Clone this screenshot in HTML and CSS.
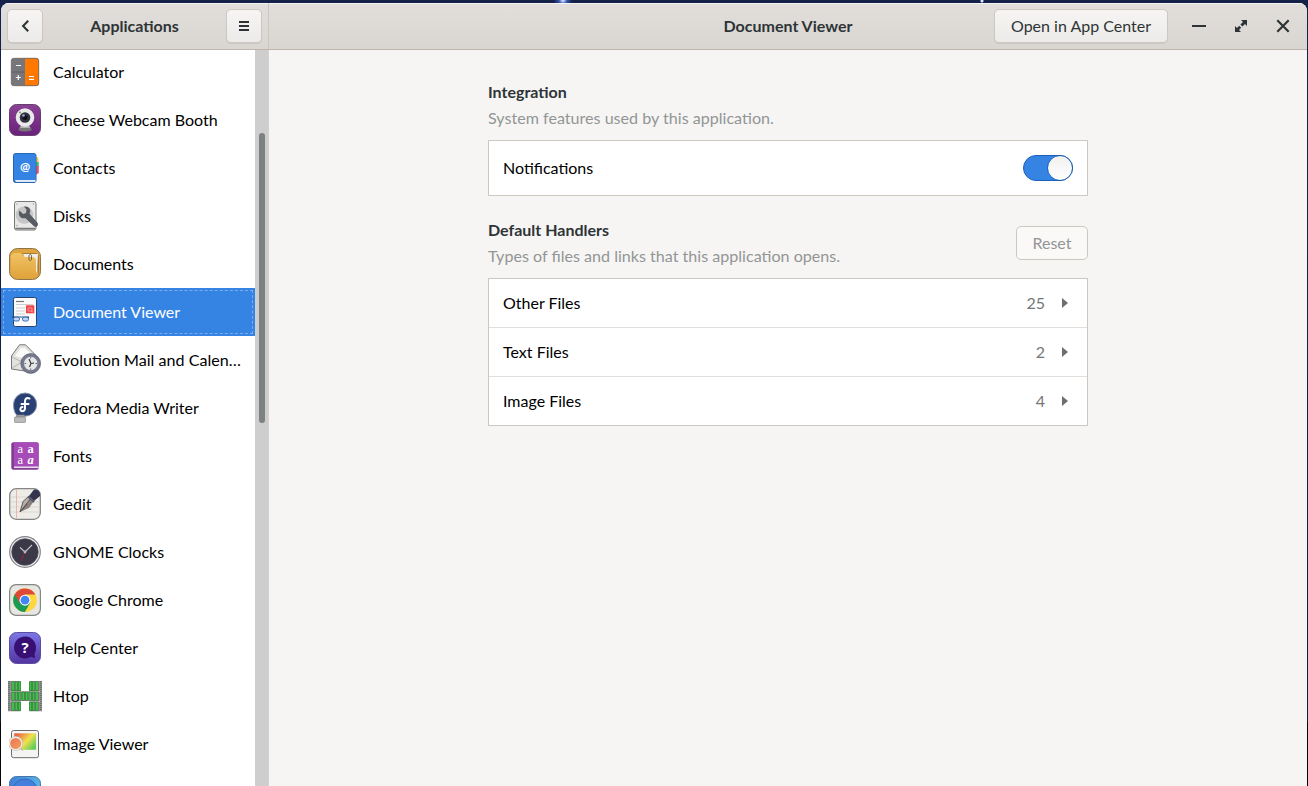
FILE: index.html
```html
<!DOCTYPE html>
<html lang="en">
<head>
<meta charset="utf-8">
<title>Applications</title>
<link rel="stylesheet" href="styles.css">
</head>
<body>
<div class="window">
  <header class="titlebar">
    <div class="titlebar-side">
      <button class="btn icon-btn" aria-label="Back"><svg width="16" height="16" viewBox="0 0 16 16"><path d="M11.200 2.800 6.100 8l5.100 5.200" fill="none" stroke="#2e3436" stroke-width="2.100"/></svg></button>
      <h1 class="title side-title">Applications</h1>
      <button class="btn icon-btn" aria-label="Menu"><svg width="16" height="16" viewBox="0 0 16 16"><path d="M3 4h10M3 8h10M3 12h10" stroke="#2e3436" stroke-width="2"/></svg></button>
    </div>
    <div class="titlebar-main">
      <h1 class="title main-title">Document Viewer</h1>
      <button class="btn open-btn">Open in App Center</button>
      <div class="controls">
        <svg width="16" height="16" viewBox="0 0 16 16"><path d="M1 8h14" stroke="#2e3436" stroke-width="2"/></svg>
        <svg width="16" height="16" viewBox="0 0 16 16"><path d="M8 2h6v6l-2-2-2.600 2.600-2-2L10 4zM2 14V8l2 2 2.200-2.200 2 2L6 12l2 2z" fill="#2e3436"/></svg>
        <svg width="16" height="16" viewBox="0 0 16 16"><path d="M2.300 2.300 13.700 13.700M13.700 2.300 2.300 13.700" stroke="#2e3436" stroke-width="2.200"/></svg>
      </div>
    </div>
  </header>
  <div class="body">
    <nav class="sidebar">
      <ul class="apps">
        <li class="app"><svg class="icon" viewBox="0 0 32 32"><rect x="2.300" y="2.300" width="27.400" height="27.400" rx="2.500" fill="#77767b"/><path d="M16 2.300h11.200a2.500 2.500 0 0 1 2.500 2.500v22.400a2.500 2.500 0 0 1-2.500 2.500H16z" fill="#ff7800"/><path d="M2.500 16H16" stroke="#605f64"/><path d="M7 9.500h5M6.800 21.500h5M9.300 19v5M20 20.500h5M20 23.300h5" stroke="#fff" stroke-width="1.200"/><rect x="2.300" y="2.300" width="27.400" height="27.400" rx="2.500" fill="none" stroke="#6d6259" stroke-width=".8"/></svg><span>Calculator</span></li>
        <li class="app"><svg class="icon" viewBox="0 0 32 32"><rect x=".5" y=".5" width="31" height="31" rx="7" fill="url(#purple)" stroke="#66406c"/><path d="M12 21h8l3 5q-7 3-14 0z" fill="#777578"/><path d="M12 21h8l1 3h-10z" fill="#b5b4b5"/><circle cx="16" cy="13.500" r="9.300" fill="#e9e9e9"/><circle cx="16" cy="13.500" r="5.300" fill="#303040"/><circle cx="16" cy="13.500" r="2.500" fill="#101018"/><circle cx="14.500" cy="11.500" r="1.300" fill="#9ca7c9"/><circle cx="11" cy="8.500" r="1" fill="#6fa150"/></svg><span>Cheese Webcam Booth</span></li>
        <li class="app"><svg class="icon" viewBox="0 0 32 32"><path d="M25 5h2.500q2 0 2 3v2h-4.500z" fill="#e7cf3d"/><path d="M25 10h4.800v5h-4.800z" fill="#45ba78"/><path d="M25 14h4.800v7l-4.800 3z" fill="#e9526b"/><rect x="4.500" y="1.500" width="22.500" height="29" rx="2" fill="#2c6cc0" stroke="#2862ad"/><path d="M5.500 27.500h21v2.500H7z" fill="#dfeaf6"/><rect x="5" y="1.800" width="21.800" height="26.200" rx="1.500" fill="#3584e4"/><text x="16" y="19" class="glyph at">@</text></svg><span>Contacts</span></li>
        <li class="app"><svg class="icon" viewBox="0 0 32 32"><rect x="5.500" y="1.500" width="21.500" height="28.500" rx="2" fill="#e8e8e8" stroke="#777"/><path d="M6.500 28.500h19.500" stroke="#777" stroke-width="1.500"/><circle cx="15.500" cy="15" r="8.800" fill="#c6c6c6"/><g fill="#aaa"><circle cx="8" cy="4" r=".8"/><circle cx="24.500" cy="4" r=".8"/><circle cx="8" cy="25.500" r=".8"/></g><path d="M10.500 10.500l3.500 3.500 3-1 .5-3.500-2.500-2.800c5.500-1 7.500 3.500 5.500 7l8 9c1.500 3-1 5-3.500 3.500l-8.500-8c-5.500 1-8-3.500-6-7.700z" fill="#565a62"/></svg><span>Disks</span></li>
        <li class="app"><svg class="icon" viewBox="0 0 32 32"><rect x=".5" y=".5" width="31" height="31" rx="8" fill="#dda43f" stroke="#8c7548"/><path d="M13 5h13q4 0 4 5v18l-4-17H16z" fill="#a87c36"/><path d="M14 6h15l-1 20-4-15H16z" fill="#f0eee8"/><path d="M2 9q0-4 4-4h5q2 0 3 2.500 1 1.500 3 1.500h6q4 0 4 4v11q0 6-6 6H8q-6 0-6-6z" fill="url(#folder)"/><path d="M20 11c0 2 2.500 2 2.500 0V8c0-2-2.500-2-2.500 0v3" fill="none" stroke="#5e4930" stroke-width=".8"/></svg><span>Documents</span></li>
        <li class="app selected"><svg class="icon" viewBox="0 0 32 32"><rect x="4.500" y="1.500" width="23" height="29" rx="1.800" fill="#fafafa" stroke="#25436b"/><path d="M7 8.500h17M7 12h9M7 15h9M7 18h9" stroke="#cfcfcf" stroke-width="1.100"/><path d="M7 5.500h8" stroke="#777" stroke-width="1.200"/><rect x="17" y="9.300" width="8.300" height="8" fill="#ed444b"/><path d="M19 12h4v3h-4zM22 15l2 1" fill="none" stroke="#ffa9a9" stroke-width=".8"/><path d="M3.500 22 3 21h17l-1 1" fill="none" stroke="#264d83"/><rect x="4.500" y="21.200" width="6" height="3.800" rx="1.800" fill="#c4d8f3" stroke="#356eb9"/><rect x="13.500" y="21.200" width="6" height="3.800" rx="1.800" fill="#c4d8f3" stroke="#356eb9"/></svg><span>Document Viewer</span></li>
        <li class="app"><svg class="icon" viewBox="0 0 32 32"><path d="M2.500 12 10.500.8h6L26.500 11v14l-4 3L2.500 25z" fill="#e2e2df" stroke="#77777a" stroke-linejoin="round"/><path d="M6 12 12 4h4l7 7-9 3z" fill="#fafafa"/><path d="M3 13l10 5L3 24M13 18l8-6" fill="none" stroke="#b5b5b5"/><circle cx="21.700" cy="19.500" r="8.300" fill="#e5e6e6" stroke="#777990" stroke-width="3.200"/><circle cx="21.700" cy="19.500" r="9.900" fill="none" stroke="#4c4d62" stroke-width=".6"/><path d="M20 15l2 4.500-1.500 3.500M21.700 19.500l3.300-.5" stroke="#333" stroke-width="1.100" fill="none"/><path d="M21.700 13v1.500M21.700 24.500V26M15.500 19.500H17M26.500 19.500H28" stroke="#555" stroke-width=".9"/></svg><span class="long">Evolution Mail and Calen…</span></li>
        <li class="app"><svg class="icon" viewBox="0 0 32 32"><path d="M4.500 12.500A11.600 11.600 0 1 1 16 24.200H9q-4.500-3-4.500-11.700z" fill="#294172" stroke="#8793a9"/><path d="M20.500 6.500c-3.500-1.500-4.500 1-4.500 3V16c0 3.500-3.500 4-4.500 2-.5-1.500.5-3 2-3M12.500 12h7" fill="none" stroke="#fff" stroke-width="2" stroke-linecap="round"/><rect x="7" y="22.800" width="8.500" height="3" fill="#999"/><rect x="5.500" y="25" width="11" height="5.500" rx=".7" fill="#bbb" stroke="#888" stroke-width=".7"/></svg><span>Fedora Media Writer</span></li>
        <li class="app"><svg class="icon" viewBox="0 0 32 32"><rect x="2.300" y="2.300" width="27.400" height="27.400" rx="2" fill="#823c91"/><path d="M5 26h24.500v2H5z" fill="#e9dcef"/><path d="M5 2.600h23q1.500 0 1.500 1.500V26.500H5z" fill="#a64bb8"/><g class="glyph font-a"><text x="11.300" y="12.800">a</text><text x="21.500" y="12.800" font-weight="bold">a</text><text x="11.300" y="23.800">a</text><text x="21.500" y="23.800" font-weight="bold" font-style="italic">a</text></g></svg><span>Fonts</span></li>
        <li class="app"><svg class="icon" viewBox="0 0 32 32"><rect x=".7" y=".7" width="30.600" height="30.600" rx="6.500" fill="#eeece6" stroke="#858585" stroke-width="1.300"/><path d="M2 9h28M2 14h28M2 19h28M2 24h28" stroke="#d6d4ce" stroke-width=".8"/><path d="M7.500 1.500v29" stroke="#eaa5a5" stroke-width=".8"/><path d="M11 24 14 13.500 20 8l5 5-5 7z" fill="#8b817e"/><path d="M11 24 14 13.500 20 8l2 2zM11 24l7-8" fill="#b8aea9" stroke="#50494a" stroke-width=".8"/><path d="M20 8 25 1.500q6 0 6 5V8l-6 5z" fill="#34344d"/><path d="M19 8.500 25 14" stroke="#55576d" stroke-width="2"/></svg><span>Gedit</span></li>
        <li class="app"><svg class="icon" viewBox="0 0 32 32"><circle cx="16" cy="16" r="15.300" fill="#efefef" stroke="#858489" stroke-width="1.200"/><circle cx="16" cy="16" r="13.300" fill="#3b3848" stroke="#555360" stroke-width=".7"/><path d="M11 11.500l5 4.500 7-7" fill="none" stroke="#c4c4ca" stroke-width="1.100"/><path d="M16 16l-4 9" stroke="#a62034" stroke-width="1"/><circle cx="16" cy="16" r="1.400" fill="#bbb"/></svg><span>GNOME Clocks</span></li>
        <li class="app"><svg class="icon" viewBox="0 0 32 32"><rect x=".6" y=".6" width="30.800" height="30.800" rx="6.500" fill="#e6e6e3" stroke="#858784" stroke-width="1.200"/><circle cx="16" cy="16.200" r="11.900" fill="#ffd63f"/><path d="M16 16.200 5.700 10.250A11.900 11.900 0 0 0 15.900 28.100L21 19z" fill="#1b9b52"/><path d="M5.700 10.250A11.900 11.900 0 0 1 26.400 10.600H16L10.900 19z" fill="#df4938"/><circle cx="16" cy="16.200" r="5.500" fill="#fff"/><circle cx="16" cy="16.200" r="4.400" fill="#4285f4"/></svg><span>Google Chrome</span></li>
        <li class="app"><svg class="icon" viewBox="0 0 32 32"><rect x=".5" y=".5" width="31" height="31" rx="7" fill="url(#violet)" stroke="#5d4ca3"/><path d="M27 15.500a11 11 0 1 0-5 9.200l4 1.600-.5-4.500a11 11 0 0 0 1.500-6.300z" fill="#381073"/><text x="16" y="21" class="glyph question">?</text></svg><span>Help Center</span></li>
        <li class="app"><svg class="icon htop" viewBox="0 0 32 32"><g fill="#8d928d"><rect x="-1" y="1" width="12.500" height="10"/><rect x="-1" y="11.300" width="34" height="9.700"/><rect x="-1" y="21.300" width="12.500" height="10"/><rect x="20.500" y="1" width="12.500" height="10"/><rect x="20.500" y="21.300" width="12.500" height="10"/></g><g fill="none" stroke="#246b2b" stroke-width="2.800"><path d="M4 1.500V11M7.300 1.500V11M10.500 1.500V11M21.500 1.500V11M24.700 1.500V11M28 1.500V11M4 11.800v8.700M7.400 11.800v8.700M10.800 11.800v8.700M14.200 11.800v8.700M17.700 11.800v8.700M21.200 11.800v8.700M24.600 11.800v8.700M28 11.800v8.700M4 21.800v9M7.300 21.800v9M10.500 21.800v9M21.500 21.800v9M24.700 21.800v9M28 21.800v9"/><path d="M4 2v8.500M7.300 2v8.500M10.500 2v8.500M21.500 2v8.500M24.700 2v8.500M28 2v8.500M4 12.300V20M7.400 12.300V20M10.800 12.300V20M14.200 12.300V20M17.700 12.300V20M21.200 12.300V20M24.600 12.300V20M28 12.300V20M4 22.300v8M7.300 22.300v8M10.500 22.300v8M21.500 22.300v8M24.700 22.300v8M28 22.300v8" stroke="#43c24b" stroke-width="1.900"/></g><path d="M0 1v30M32 1v30" stroke="#5c5f5c" stroke-width="1.300" stroke-dasharray="1 1"/></svg><span>Htop</span></li>
        <li class="app"><svg class="icon" viewBox="0 0 32 32"><rect x="2.500" y="2.500" width="27" height="27.200" rx="2" fill="#f4f4f3" stroke="#6b6b6b"/><rect x="5.300" y="5.300" width="21.800" height="16.500" fill="url(#rainbow)"/><circle cx="6.700" cy="15.500" r="6.200" fill="#ef8750" stroke="#aaa" stroke-width="2.200"/><circle cx="6.700" cy="15.500" r="6.200" fill="url(#orange)" stroke="#f1ebe6" stroke-width="1.400"/><path d="M11.500 20l2.500 2.500" stroke="#bbb" stroke-width="1.500"/></svg><span>Image Viewer</span></li>
        <li class="app"><svg class="icon" viewBox="0 0 32 32"><rect x=".5" y=".5" width="31" height="31" rx="7" fill="url(#blue)" stroke="#4875a6"/><ellipse cx="16" cy="14" rx="12" ry="11" fill="#4480db" stroke="#3567b8"/></svg><span></span></li>
      </ul>
      <div class="scrollbar"><div class="thumb"></div></div>
    </nav>
    <main class="content">
      <section class="panel">
        <div class="section-head first">
          <div><h2>Integration</h2><p>System features used by this application.</p></div>
        </div>
        <div class="list">
          <div class="row tall"><span>Notifications</span><div class="switch"><div class="knob"></div></div></div>
        </div>
        <div class="section-head">
          <div><h2>Default Handlers</h2><p>Types of files and links that this application opens.</p></div>
          <button class="reset">Reset</button>
        </div>
        <div class="list">
          <div class="row"><span>Other Files</span><span class="count">25</span><i class="arrow"></i></div>
          <div class="row"><span>Text Files</span><span class="count">2</span><i class="arrow"></i></div>
          <div class="row"><span>Image Files</span><span class="count">4</span><i class="arrow"></i></div>
        </div>
      </section>
    </main>
  </div>
</div>
<svg class="defs" width="0" height="0">
  <defs>
    <linearGradient id="purple" x2="0" y2="1"><stop stop-color="#8b4194"/><stop offset="1" stop-color="#69217b"/></linearGradient>
    <linearGradient id="folder" x2="0" y2="1"><stop stop-color="#f1c365"/><stop offset="1" stop-color="#dfa33b"/></linearGradient>
    <linearGradient id="violet" x2="0" y2="1"><stop stop-color="#7b78e6"/><stop offset="1" stop-color="#5234a0"/></linearGradient>
    <linearGradient id="blue" x2="1" y2="0"><stop stop-color="#3f7fd8"/><stop offset="1" stop-color="#57b4e6"/></linearGradient>
    <linearGradient id="rainbow" x2="1" y2=".7"><stop stop-color="#e34b3c"/><stop offset=".35" stop-color="#efa04a"/><stop offset=".6" stop-color="#f2e04a"/><stop offset="1" stop-color="#63cd5b"/></linearGradient>
    <linearGradient id="orange" x2="1" y2="1"><stop stop-color="#eb704e"/><stop offset="1" stop-color="#f4a263"/></linearGradient>
  </defs>
</svg>
</body>
</html>
```
FILE: styles.css
```css
* { box-sizing: border-box; }
body {
  margin: 0;
  height: 786px;
  overflow: hidden;
  padding: 3px 1px 0;
  background:
    radial-gradient(circle at 563px 0, #c9d3ff 1px, #3a55b0 4px, transparent 9px),
    radial-gradient(circle at 982px 1px, #dfe8ff 1px, transparent 2px),
    linear-gradient(#14224a, #141d38 720px, #050609 724px);
  font: 16px/24px Lato, Carlito, sans-serif;
  color: #000;
}
h1, h2, p, ul { margin: 0; padding: 0; }
button { font: inherit; }
.window { height: 783px; display: flex; flex-direction: column; border-radius: 8px 8px 0 0; overflow: hidden; background: #f6f5f4; }
.titlebar {
  display: flex;
  flex: none;
  height: 47px;
  background: linear-gradient(#e1dedb, #d9d6d2);
  border-bottom: 1px solid #bfb3ab;
  box-shadow: inset 0 1px #f5f4f3;
  color: #2e3436;
}
.titlebar-side { width: 268px; display: flex; align-items: center; justify-content: space-between; padding: 0 6px; border-right: 1px solid #cbc6c1; }
.titlebar-main { flex: 1; display: flex; align-items: center; padding-right: 16px; }
.title { font-size: 1em; font-weight: bold; line-height: 24px; white-space: nowrap; }
.main-title { flex: 1; padding-left: 313px; text-align: center; }
.btn {
  height: 34px;
  border: 1px solid #cdc7c2;
  border-radius: 5px;
  background: linear-gradient(#f6f5f4, #edebe9);
  box-shadow: 0 1px 1px rgba(0, 0, 0, .07);
  color: #2e3436;
  display: flex;
  align-items: center;
  justify-content: center;
  padding: 0;
  white-space: nowrap;
}
.icon-btn { width: 36px; }
.open-btn { width: 174px; margin-right: 23px; }
.controls { display: flex; gap: 26px; }
.controls svg { display: block; }
.body { flex: 1; display: flex; min-height: 0; }
.sidebar { width: 268px; display: flex; background: #fff; border-right: 1px solid #d5d1ce; overflow: hidden; }
.apps { width: 254px; list-style: none; margin-top: -2px; }
.app { height: 48px; display: flex; align-items: center; gap: 12px; padding-left: 8px; white-space: nowrap; }
.long { font-size: 16.1px; }
.selected { background: #3584e4; color: #fff; outline: 1px dashed #79aeee; outline-offset: -3px; }
.icon { width: 32px; height: 32px; flex: none; }
.htop { overflow: visible; }
.scrollbar { width: 13px; background: #cecece; padding: 83px 3px 0 4px; }
.thumb { height: 290px; border-radius: 3px; background: #7e8182; }
.content { flex: 1; display: flex; justify-content: center; }
.panel { width: 600px; padding-top: 29px; }
.section-head { display: flex; justify-content: space-between; align-items: flex-start; height: 82px; padding-top: 21px; }
.section-head.first { height: 61px; padding-top: 0; }
.section-head h2 { font-size: 1em; line-height: 26px; color: #2e3436; }
.section-head p { font-size: 16.1px; line-height: 26px; color: #929595; white-space: nowrap; }
.reset { width: 72px; height: 34px; margin-top: 9px; border: 1px solid #cdc7c2; border-radius: 5px; background: #faf9f8; color: #929595; padding: 0; }
.list { border: 1px solid #cdc7c2; background: #fff; }
.row { height: 49px; display: flex; align-items: center; padding: 0 14px; border-bottom: 1px solid #e1dedb; }
.row:last-child { height: 48px; border-bottom: 0; }
.row.tall:last-child { height: 54px; }
.count { margin-left: auto; color: #747778; }
.arrow { width: 6px; height: 10px; margin: 0 5px 0 17px; background: #6c6f70; clip-path: polygon(0 0, 100% 50%, 0 100%); }
.switch { width: 50px; height: 26px; margin-left: auto; border: 1px solid #1b61b9; border-radius: 13px; background: #3584e4; display: flex; justify-content: flex-end; }
.knob { width: 26px; height: 26px; margin: -1px; border: 1px solid #1b61b9; border-radius: 50%; background: linear-gradient(#f2f1f0, #fff); }
.glyph { fill: #fff; text-anchor: middle; }
.at { font: bold 12px Lato, sans-serif; }
.question { font: bold 15px "Open Sans", sans-serif; }
.font-a { font-family: "Liberation Serif", serif; font-size: 12.5px; }
.defs { display: block; }
```
